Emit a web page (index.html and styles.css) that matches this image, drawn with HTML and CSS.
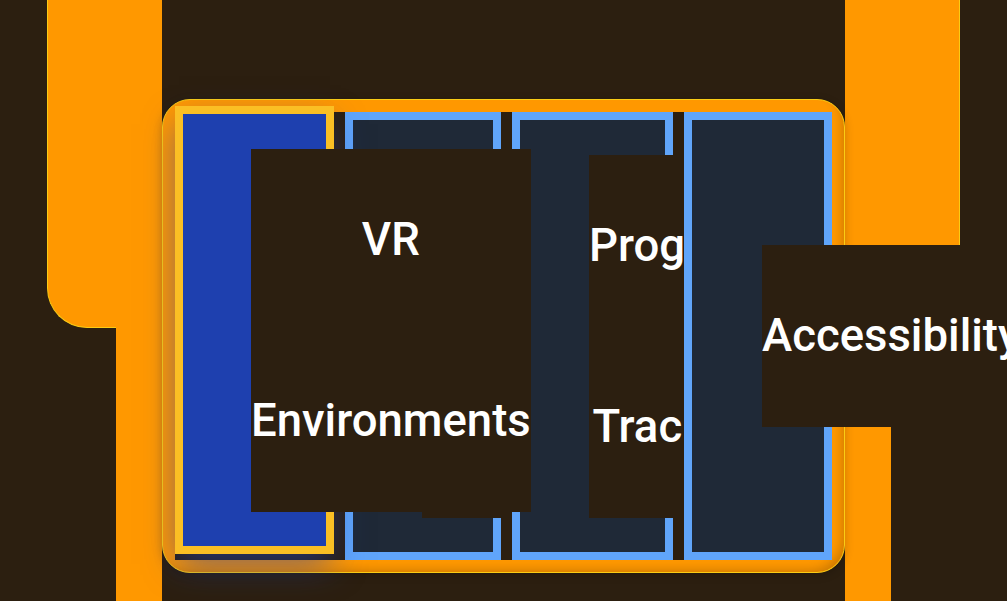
FILE: index.html
```html
<!DOCTYPE html>
<html lang="en">
<head>
<meta charset="utf-8">
<title>Learning Modes</title>
<link rel="stylesheet" href="styles.css">
</head>
<body>
<div class="page">
  <div class="deco deco-left">
    <div class="deco-cap"></div>
    <div class="deco-stem"></div>
  </div>
  <div class="tabbar">
    <div class="tablist" role="tablist">
      <div class="tab tab-active tab-vr" role="tab" aria-selected="true"><span class="tab-label">VR Environments</span></div>
      <div class="tab tab-sim" role="tab"><span class="tab-label">3D Simulations</span></div>
      <div class="tab tab-progress" role="tab"><span class="tab-label">Progress Tracking</span></div>
      <div class="tab tab-access" role="tab"><span class="tab-label">Accessibility</span></div>
    </div>
  </div>
  <div class="deco deco-right">
    <div class="deco-cap"></div>
    <div class="deco-stem"></div>
  </div>
</div>
</body>
</html>
```

FILE: styles.css
```css
html,
body {
  margin: 0;
  height: 100%;
  overflow: hidden;
  background: #2c1f10;
}

body {
  font-family: Roboto, "Noto Sans", sans-serif;
}

.page {
  display: flex;
  height: 601px;
  padding: 0 47px;
  box-sizing: border-box;
}

.deco {
  flex: none;
  width: 115px;
  display: flex;
  flex-direction: column;
}

.deco-cap {
  height: 328px;
  box-sizing: border-box;
  background: #ff9800;
  border-bottom: 1px solid #facc15;
}

.deco-left .deco-cap {
  border-left: 1px solid #facc15;
  border-bottom-left-radius: 40px;
}

.deco-right .deco-cap {
  border-right: 1px solid #facc15;
  border-bottom-right-radius: 40px;
}

.deco-stem {
  flex: 1;
  width: 46px;
  margin-top: -1px;
  background: #ff9800;
}

.deco-left .deco-stem {
  align-self: flex-end;
}

.deco-right .deco-stem {
  align-self: flex-start;
}

.tabbar {
  position: relative;
  flex: none;
  width: 683px;
  height: 474px;
  margin-top: 99px;
  box-sizing: border-box;
  padding: 12px;
  border: 1px solid #facc15;
  border-radius: 28px;
  background: #ff9800;
  box-shadow: inset -7px -7px 12px -6px rgba(0, 0, 0, 0.22), 0 2px 10px rgba(0, 0, 0, 0.2);
}

.tablist {
  display: flex;
  gap: 11px;
  height: 100%;
  background: #2c1f10;
}

.tab {
  flex: none;
  box-sizing: border-box;
  height: 448px;
  border: 8px solid #60a5fa;
  background: #1f2937;
  display: flex;
  flex-direction: column;
  justify-content: center;
  align-items: flex-start;
  padding-left: 69px;
}

.tab-active {
  border-color: #fbbf24;
  background: #1e40af;
  transform: translateY(-6px);
  box-shadow: 0 14px 32px -4px rgba(30, 64, 175, 0.6);
}

.tab-vr {
  width: 159px;
  padding-left: 68px;
}

.tab-sim {
  width: 156px;
}

.tab-progress {
  width: 161px;
}

.tab-access {
  width: 148px;
  padding-left: 70px;
}

.tab-label {
  width: min-content;
  background: #2c1f10;
  color: #ffffff;
  font-size: 45.5px;
  font-weight: 500;
  line-height: 181.5px;
  text-align: center;
}
```
